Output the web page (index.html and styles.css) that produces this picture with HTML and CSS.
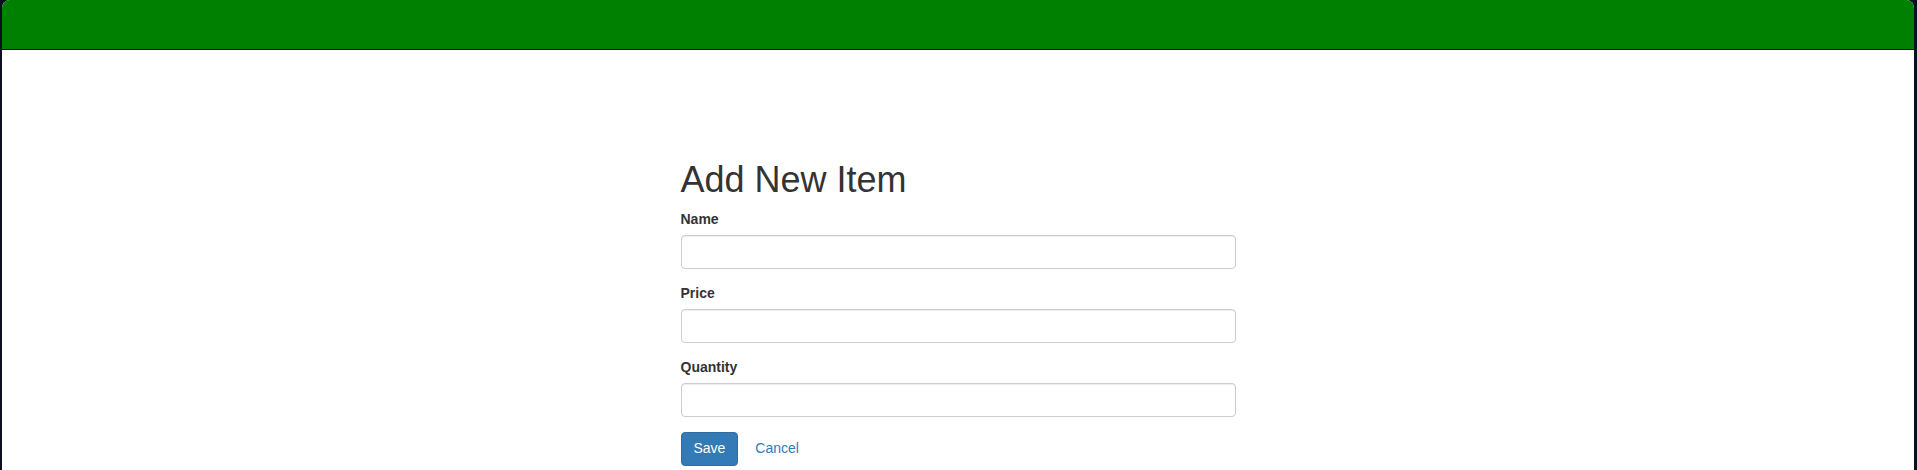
FILE: index.html
```html
<!DOCTYPE html>
<html>
<head>
<meta charset="utf-8">
<title>Add New Item</title>
<link rel="stylesheet" href="styles.css">
</head>
<body>
<div class="window">
  <header class="topbar"></header>
  <main class="content">
    <div class="container">
      <div class="col">
        <h1 class="title">Add New Item</h1>
        <form class="form">
          <div class="form-group">
            <label class="label">Name</label>
            <input class="input" type="text">
          </div>
          <div class="form-group">
            <label class="label">Price</label>
            <input class="input" type="text">
          </div>
          <div class="form-group">
            <label class="label">Quantity</label>
            <input class="input" type="text">
          </div>
          <div class="actions">
            <button type="button" class="btn btn-primary">Save</button>
            <a class="btn btn-link">Cancel</a>
          </div>
        </form>
      </div>
    </div>
  </main>
</div>
</body>
</html>
```

FILE: styles.css
```css
* { box-sizing: border-box; }
html, body { margin: 0; height: 100%; }
body {
  background: #0a1020;
  font-family: "Liberation Sans", Arial, Helvetica, sans-serif;
  font-size: 14px;
  line-height: 1.42857;
  color: #333;
  overflow: hidden;
}
.window {
  margin: 0 3px 0 2px;
  height: 100%;
  background: #fff;
  border-radius: 8px 8px 0 0;
  overflow: hidden;
}
.topbar {
  height: 50px;
  background: #008000;
  border-bottom: 1px solid #111;
}
.content {
  padding-top: 90px;
}
.container {
  width: 1170px;
  margin: 0 auto;
  padding: 0 15px;
  display: flex;
  justify-content: center;
}
.col {
  width: 555px;
}
.title {
  margin: 20px 0 10px;
  font-size: 36px;
  font-weight: 500;
  line-height: 1.1;
  color: #333;
}
.form-group {
  margin-bottom: 15px;
}
.label {
  display: block;
  margin-bottom: 5px;
  font-weight: bold;
}
.input {
  display: block;
  width: 100%;
  height: 34px;
  padding: 6px 12px;
  font: inherit;
  color: #555;
  background: #fff;
  border: 1px solid #ccc;
  border-radius: 4px;
  box-shadow: inset 0 1px 1px rgba(0,0,0,.075);
}
.btn {
  display: inline-block;
  padding: 6px 12px;
  font-family: inherit;
  font-size: 14px;
  line-height: 1.42857;
  border: 1px solid transparent;
  border-radius: 4px;
  cursor: pointer;
  vertical-align: middle;
}
.btn-primary {
  color: #fff;
  background: #337ab7;
  border-color: #2e6da4;
}
.btn-link {
  color: #337ab7;
  background: transparent;
}
```
